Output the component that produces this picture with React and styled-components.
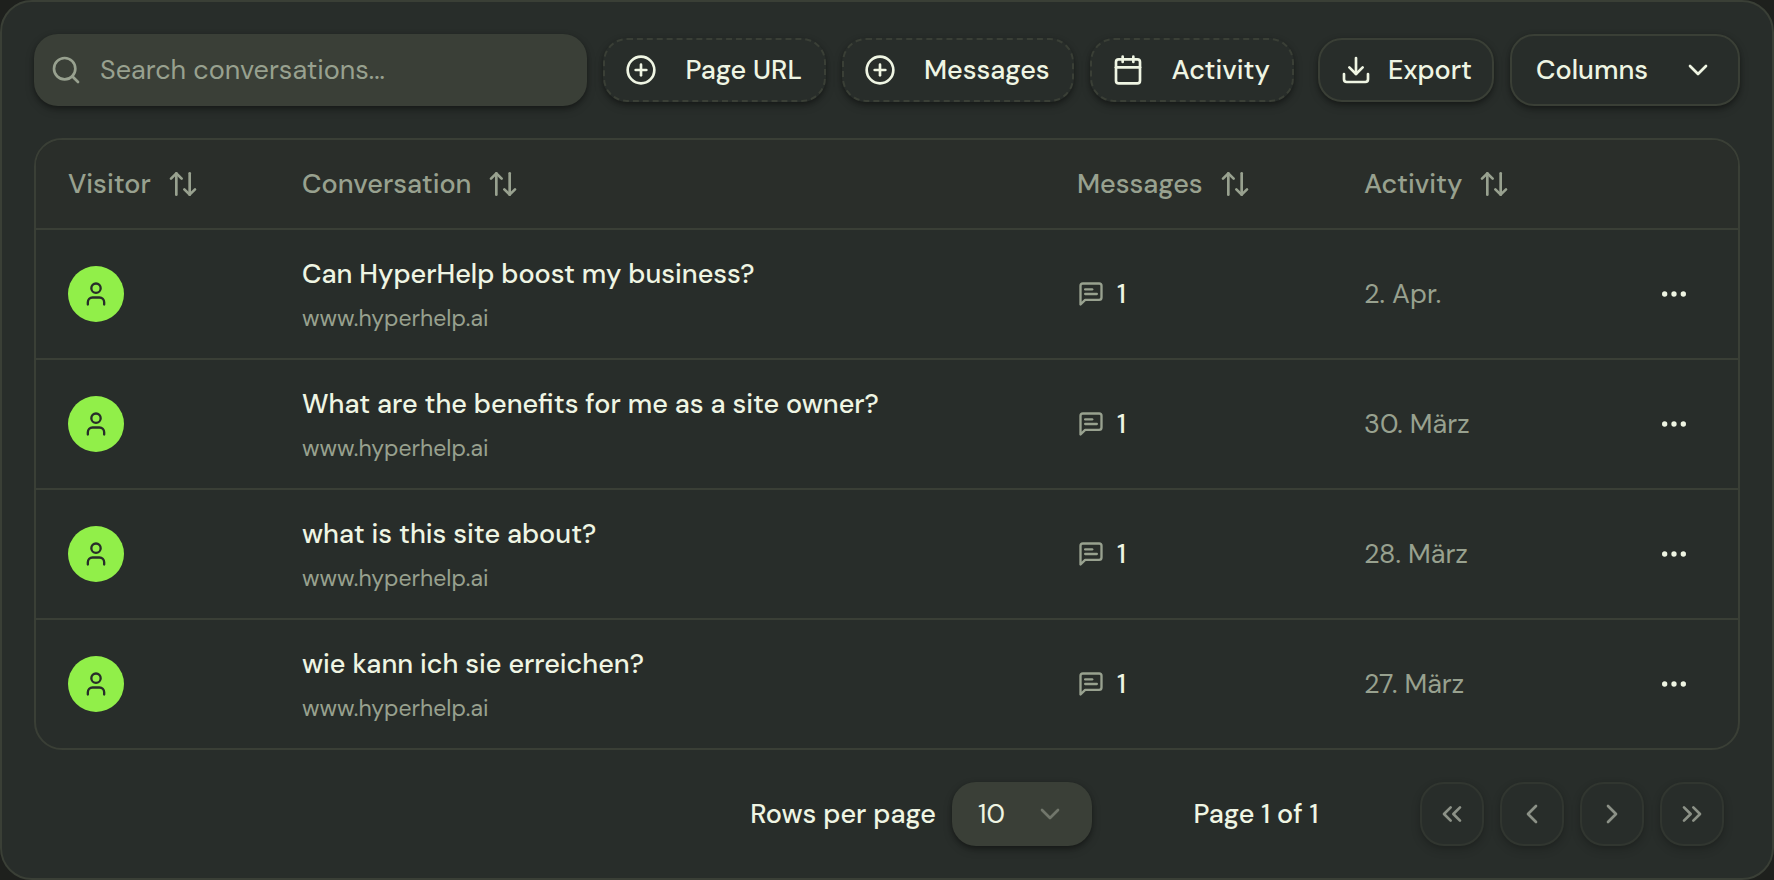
import React, { useState } from 'react'
import styled, { createGlobalStyle } from 'styled-components'
import {
  Calendar,
  ChevronDown,
  ChevronLeft,
  ChevronRight,
  ChevronsLeft,
  ChevronsRight,
  CirclePlus,
  Ellipsis,
  Search,
  User,
} from 'lucide-react'

const conversations = [
  { id: 1, title: 'Can HyperHelp boost my business?', url: 'www.hyperhelp.ai', messages: 1, activity: '2. Apr.' },
  { id: 2, title: 'What are the benefits for me as a site owner?', url: 'www.hyperhelp.ai', messages: 1, activity: '30. März' },
  { id: 3, title: 'what is this site about?', url: 'www.hyperhelp.ai', messages: 1, activity: '28. März' },
  { id: 4, title: 'wie kann ich sie erreichen?', url: 'www.hyperhelp.ai', messages: 1, activity: '27. März' },
]

const columns = ['Visitor', 'Conversation', 'Messages', 'Activity']

const SortIcon = () => (
  <svg width="32" height="32" viewBox="0 0 24 24" fill="none" stroke="currentColor" strokeWidth="2" strokeLinecap="round" strokeLinejoin="round" aria-hidden="true">
    <path d="m21 16-4 4-4-4" />
    <path d="M17 20V4" />
    <path d="m3 8 4-4 4 4" />
    <path d="M7 4v16" />
  </svg>
)

const DownloadIcon = () => (
  <svg width="32" height="32" viewBox="0 0 24 24" fill="none" stroke="currentColor" strokeWidth="2" strokeLinecap="round" strokeLinejoin="round" aria-hidden="true">
    <path d="M21 15v4a2 2 0 0 1-2 2H5a2 2 0 0 1-2-2v-4" />
    <path d="m7 10 5 5 5-5" />
    <path d="M12 15V3" />
  </svg>
)

const MessageIcon = () => (
  <svg width="28" height="28" viewBox="0 0 24 24" fill="none" stroke="currentColor" strokeWidth="2" strokeLinecap="round" strokeLinejoin="round" aria-hidden="true">
    <path d="M21 15a2 2 0 0 1-2 2H7l-4 4V5a2 2 0 0 1 2-2h14a2 2 0 0 1 2 2z" />
    <path d="M13 8H7" />
    <path d="M17 12H7" />
  </svg>
)

export default function App() {
  const [search, setSearch] = useState('')
  const [pageSize, setPageSize] = useState('10')

  const rows = conversations.filter((c) =>
    c.title.toLowerCase().includes(search.toLowerCase())
  )

  return (
    <>
      <GlobalStyle />
      <Panel>
        <Toolbar>
          <SearchBox>
            <Search size={32} aria-hidden="true" />
            <SearchInput
              type="text"
              aria-label="Search conversations"
              placeholder="Search conversations..."
              value={search}
              onChange={(e) => setSearch(e.target.value)}
            />
          </SearchBox>
          <Filters>
            <FilterButton type="button">
              <CirclePlus size={32} aria-hidden="true" />
              Page URL
            </FilterButton>
            <FilterButton type="button">
              <CirclePlus size={32} aria-hidden="true" />
              Messages
            </FilterButton>
            <FilterButton type="button">
              <Calendar size={32} aria-hidden="true" />
              Activity
            </FilterButton>
          </Filters>
          <Actions>
            <ExportButton type="button">
              <DownloadIcon />
              Export
            </ExportButton>
            <ColumnsButton type="button" aria-haspopup="menu">
              Columns
              <ChevronDown size={32} aria-hidden="true" />
            </ColumnsButton>
          </Actions>
        </Toolbar>

        <TableFrame>
          <Table>
            <colgroup>
              <Col $width="234px" />
              <Col />
              <Col $width="287px" />
              <Col $width="246px" />
              <Col $width="160px" />
            </colgroup>
            <thead>
              <tr>
                {columns.map((name) => (
                  <HeadCell key={name} scope="col">
                    <SortButton type="button">
                      {name}
                      <SortIcon />
                    </SortButton>
                  </HeadCell>
                ))}
                <HeadCell as="td" />
              </tr>
            </thead>
            <tbody>
              {rows.map((row) => (
                <Row key={row.id}>
                  <Cell>
                    <Avatar>
                      <User size={28} aria-hidden="true" />
                    </Avatar>
                  </Cell>
                  <Cell>
                    <Title>{row.title}</Title>
                    <Url>{row.url}</Url>
                  </Cell>
                  <Cell>
                    <Count>
                      <MessageIcon />
                      <span>{row.messages}</span>
                    </Count>
                  </Cell>
                  <Cell $muted>{row.activity}</Cell>
                  <Cell $end>
                    <MenuButton type="button" aria-label={`Actions for ${row.title}`}>
                      <Ellipsis size={32} aria-hidden="true" />
                    </MenuButton>
                  </Cell>
                </Row>
              ))}
            </tbody>
          </Table>
        </TableFrame>

        <Footer>
          <PageSize>
            <label htmlFor="page-size">Rows per page</label>
            <SelectBox>
              <Select id="page-size" value={pageSize} onChange={(e) => setPageSize(e.target.value)}>
                <option value="10">10</option>
                <option value="20">20</option>
                <option value="50">50</option>
              </Select>
              <ChevronDown size={32} aria-hidden="true" />
            </SelectBox>
          </PageSize>
          <PageInfo>Page 1 of 1</PageInfo>
          <Pager aria-label="Pagination">
            <PageButton type="button" aria-label="First page" disabled>
              <ChevronsLeft size={32} />
            </PageButton>
            <PageButton type="button" aria-label="Previous page" disabled>
              <ChevronLeft size={32} />
            </PageButton>
            <PageButton type="button" aria-label="Next page" disabled>
              <ChevronRight size={32} />
            </PageButton>
            <PageButton type="button" aria-label="Last page" disabled>
              <ChevronsRight size={32} />
            </PageButton>
          </Pager>
        </Footer>
      </Panel>
    </>
  )
}

const GlobalStyle = createGlobalStyle`
  :root {
    --page: #1e201d;
    --panel: #282d2a;
    --head: #2a2e2a;
    --border: #3a3f36;
    --field: #3a3f37;
    --text: #eff5e3;
    --muted: #98a18f;
    --accent: #91ef49;
    --shadow: 0 4px 8px rgba(0, 0, 0, 0.25), 0 2px 4px rgba(0, 0, 0, 0.25);
  }

  * {
    box-sizing: border-box;
  }

  body {
    margin: 0;
    background: var(--page);
    color: var(--text);
    font-family: 'DM Sans', Lato, 'Open Sans', sans-serif;
    font-size: 27px;
    line-height: 40px;
    -webkit-font-smoothing: antialiased;
  }

  button, input, select {
    font: inherit;
    color: inherit;
  }

  svg {
    flex-shrink: 0;
  }
`

const Panel = styled.main`
  display: flex;
  flex-direction: column;
  gap: 32px;
  min-height: 100vh;
  padding: 32px;
  background: var(--panel);
  border: 2px solid var(--border);
  border-radius: 32px;
`

const Toolbar = styled.div`
  display: flex;
  align-items: center;
  gap: 16px;
`

const SearchBox = styled.div`
  flex: 1;
  display: flex;
  align-items: center;
  gap: 18px;
  height: 72px;
  min-width: 0;
  padding: 0 16px;
  color: var(--muted);
  background: var(--field);
  border-radius: 24px;
  box-shadow: var(--shadow);
`

const SearchInput = styled.input`
  flex: 1;
  min-width: 0;
  padding: 0;
  background: none;
  border: 0;
  outline: 0;
  color: var(--text);

  &::placeholder {
    color: var(--muted);
    opacity: 1;
  }
`

const Filters = styled.div`
  display: flex;
  gap: 16px;
`

const Actions = styled.div`
  display: flex;
  align-items: center;
  gap: 16px;
  margin-left: 8px;
`

const Button = styled.button`
  display: flex;
  align-items: center;
  height: 64px;
  padding: 0 20px;
  font-weight: 500;
  white-space: nowrap;
  background: var(--panel);
  border: 2px solid var(--border);
  border-radius: 24px;
  box-shadow: var(--shadow);
  cursor: pointer;
`

const FilterButton = styled(Button)`
  gap: 28px;
  padding-right: 22px;
  border-style: dashed;
`

const ExportButton = styled(Button)`
  gap: 16px;
`

const ColumnsButton = styled(Button)`
  justify-content: space-between;
  min-width: 230px;
  height: 72px;
  padding: 0 24px;
`

const TableFrame = styled.div`
  overflow: hidden;
  border: 2px solid var(--border);
  border-radius: 28px;
`

const Table = styled.table`
  width: 100%;
  table-layout: fixed;
  border-collapse: separate;
  border-spacing: 0;
`

const Col = styled.col`
  width: ${({ $width }) => $width || 'auto'};
`

const HeadCell = styled.th`
  height: 90px;
  padding: 0 0 0 32px;
  text-align: left;
  background: var(--head);
  border-bottom: 2px solid var(--border);
`

const SortButton = styled.button`
  display: flex;
  align-items: center;
  gap: 16px;
  padding: 0;
  font-weight: 500;
  color: var(--muted);
  background: none;
  border: 0;
  cursor: pointer;
`

const Cell = styled.td`
  padding: 24px 32px;
  vertical-align: middle;
  text-align: ${({ $end }) => ($end ? 'right' : 'left')};
  color: ${({ $muted }) => ($muted ? 'var(--muted)' : 'inherit')};
  border-bottom: 2px solid var(--border);
`

const Row = styled.tr`
  &:last-child ${Cell} {
    border-bottom: 0;
  }
`

const Avatar = styled.div`
  display: flex;
  align-items: center;
  justify-content: center;
  width: 56px;
  height: 56px;
  color: var(--panel);
  background: var(--accent);
  border-radius: 50%;
`

const Title = styled.div`
  font-weight: 500;
`

const Url = styled.div`
  margin-top: 8px;
  font-size: 23px;
  line-height: 32px;
  color: var(--muted);
`

const Count = styled.div`
  display: flex;
  align-items: center;
  gap: 12px;
  color: var(--muted);

  span {
    font-weight: 500;
    color: var(--text);
  }
`

const MenuButton = styled.button`
  display: inline-flex;
  align-items: center;
  justify-content: center;
  width: 64px;
  height: 64px;
  padding: 0;
  vertical-align: middle;
  background: none;
  border: 0;
  cursor: pointer;
`

const Footer = styled.div`
  display: flex;
  align-items: center;
  justify-content: flex-end;
  padding-right: 16px;
  font-weight: 500;
`

const PageSize = styled.div`
  display: flex;
  align-items: center;
  gap: 16px;
`

const SelectBox = styled.div`
  display: grid;
  align-items: center;
  width: 140px;
  height: 64px;
  background: var(--field);
  border-radius: 24px;
  box-shadow: var(--shadow);

  > * {
    grid-area: 1 / 1;
  }

  svg {
    justify-self: end;
    margin-right: 26px;
    opacity: 0.3;
    pointer-events: none;
  }
`

const Select = styled.select`
  width: 100%;
  height: 100%;
  padding: 0 26px;
  font-weight: 400;
  background: none;
  border: 0;
  appearance: none;
  cursor: pointer;
`

const PageInfo = styled.div`
  width: 200px;
  margin: 0 64px;
  text-align: center;
`

const Pager = styled.nav`
  display: flex;
  gap: 16px;
`

const PageButton = styled(Button)`
  justify-content: center;
  width: 64px;
  padding: 0;
  opacity: 0.5;
  cursor: default;
`
